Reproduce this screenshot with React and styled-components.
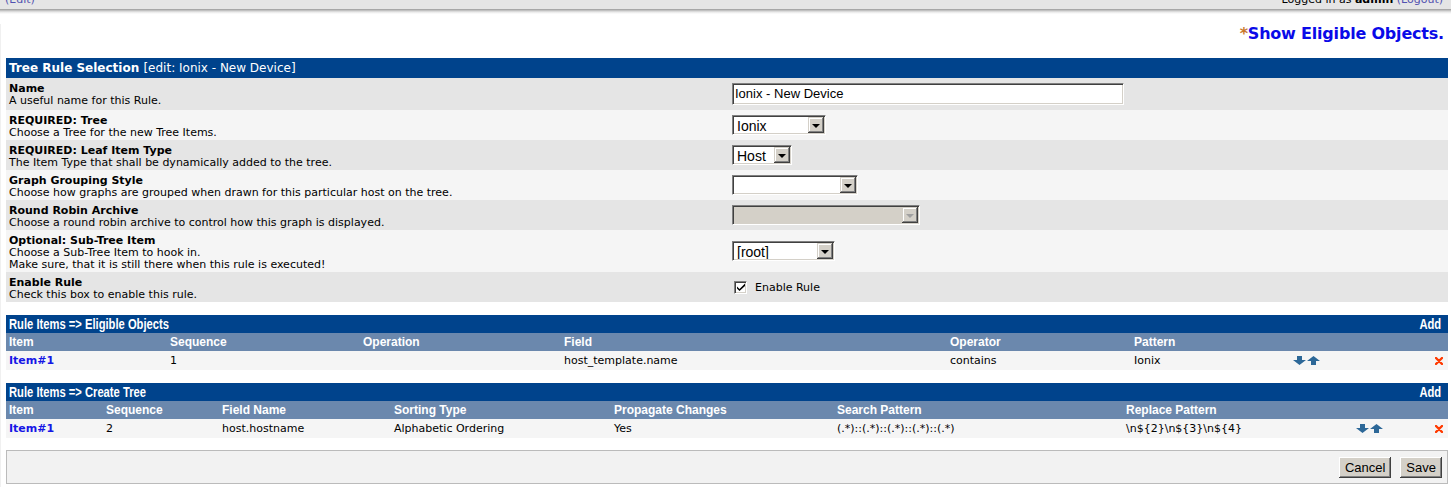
import React from "react"
import styled, { createGlobalStyle } from "styled-components"

const GlobalStyle = createGlobalStyle`
  html, body {
    margin: 0;
    padding: 0;
    background: #fff;
    font-family: "DejaVu Sans", Verdana, sans-serif;
    font-size: 11px;
    color: #000;
  }
`

const arial = `"Liberation Sans", Arial, sans-serif`

const TopBar = styled.div`
  height: 9px;
  overflow: hidden;
  background: #e5e5e5;
  display: flex;
  justify-content: space-between;
  padding: 0 8px 0 5px;
  font-size: 11px;
  line-height: 13px;
  > span {
    margin-top: -7px;
  }
  b {
    color: #000;
  }
  .link {
    color: #5151b0;
  }
`

const Shadow = styled.div`
  height: 5px;
  background: linear-gradient(#9a9a9a, #e8e8e8 60%, #fff);
`

const Page = styled.div`
  padding: 0 3px 20px 5px;
  border-left: 1px solid #f0f0f0;
`

const ShowLink = styled.div`
  margin: 10px 0 14px;
  padding-right: 4px;
  text-align: right;
  font-size: 16px;
  line-height: 20px;
  font-weight: bold;
  letter-spacing: -0.2px;
  color: #0a0ae8;
  .star {
    color: #c9782e;
  }
`

const TitleBar = styled.div`
  height: ${({ $narrow }) => ($narrow ? "18px" : "20px")};
  background: #00438c;
  color: #fff;
  display: flex;
  align-items: center;
  justify-content: space-between;
  padding: 0 7px 0 3px;
  font-family: ${({ $narrow }) => ($narrow ? arial : `"DejaVu Sans", sans-serif`)};
  font-size: ${({ $narrow }) => ($narrow ? "14px" : "12px")};
  font-weight: bold;
  .sub {
    font-weight: normal;
  }
`

const Condensed = styled.span`
  display: inline-block;
  white-space: nowrap;
  transform: scaleX(0.8);
  transform-origin: ${({ $end }) => ($end ? "right" : "left")} center;
`

const FormRow = styled.div`
  display: grid;
  grid-template-columns: 1fr 1fr;
  background: ${({ $alt }) => ($alt ? "#f5f5f5" : "#e5e5e5")};
`

const LabelCell = styled.div`
  padding: 5px 3px 1px;
  line-height: 12px;
  b {
    display: block;
  }
`

const ValueCell = styled.div`
  display: flex;
  align-items: center;
  padding-left: 5px;
`

const TextInput = styled.div`
  box-sizing: border-box;
  width: 392px;
  height: 22px;
  margin: 5px 0;
  background: #fff;
  border: 1px solid;
  border-color: #808080 #fff #fff #808080;
  box-shadow: inset 1px 1px #404040, inset -1px -1px #d4d0c8;
  font-family: ${arial};
  font-size: 13px;
  line-height: 20px;
  padding-left: 2px;
  color: #000;
`

const SelectBox = styled.div`
  box-sizing: border-box;
  width: ${({ $w }) => $w}px;
  height: 20px;
  display: flex;
  background: ${({ $disabled }) => ($disabled ? "#d4d0c8" : "#fff")};
  border: 1px solid;
  border-color: #808080 #fff #fff #808080;
  box-shadow: inset 1px 1px #404040, inset -1px -1px #d4d0c8;
  padding: 1px;
  font-family: ${arial};
  font-size: 14px;
  line-height: 18px;
`

const SelectText = styled.span`
  flex: 1;
  padding-left: 3px;
  white-space: nowrap;
  overflow: hidden;
`

const DropButton = styled.span`
  width: 16px;
  height: 100%;
  background: #d4d0c8;
  box-sizing: border-box;
  box-shadow: inset -1px -1px #404040, inset 1px 1px #d4d0c8,
    inset -2px -2px #808080, inset 2px 2px #fff;
  display: flex;
  align-items: center;
  justify-content: center;
  &::after {
    content: "";
    border-left: 4px solid transparent;
    border-right: 4px solid transparent;
    border-top: 4px solid ${({ $disabled }) => ($disabled ? "#a0a0a0" : "#000")};
    margin-top: 1px;
  }
`

const CheckLabel = styled.label`
  display: flex;
  align-items: center;
  gap: 8px;
  padding-left: 2px;
  font-size: 11px;
`

const CheckBox = styled.span`
  box-sizing: border-box;
  width: 13px;
  height: 13px;
  background: #fff;
  border: 1px solid;
  border-color: #808080 #fff #fff #808080;
  box-shadow: inset 1px 1px #404040, inset -1px -1px #d4d0c8;
  display: flex;
  align-items: center;
  justify-content: center;
`

const Section = styled.div`
  margin-top: 13px;
`

const GridRow = styled.div`
  display: grid;
  grid-template-columns: ${({ $cols }) => $cols};
  align-items: center;
  height: ${({ $h }) => $h}px;
  background: ${({ $head }) => ($head ? "#6b88ad" : "#f5f5f5")};
  color: ${({ $head }) => ($head ? "#fff" : "#000")};
  font-family: ${({ $head }) => ($head ? arial : `"DejaVu Sans", sans-serif`)};
  font-size: ${({ $head }) => ($head ? "12px" : "11px")};
  font-weight: ${({ $head }) => ($head ? "bold" : "normal")};
`

const Cell = styled.div`
  padding: 0 3px;
  white-space: nowrap;
  display: flex;
  align-items: center;
  justify-content: ${({ $spread }) => ($spread ? "space-between" : "flex-start")};
  padding-right: ${({ $spread }) => ($spread ? "5px" : "3px")};
`

const ItemLink = styled.span`
  color: #1616e6;
  font-weight: bold;
`

const Footer = styled.div`
  margin-top: 12px;
  height: 34px;
  box-sizing: border-box;
  border: 1px solid #bbb;
  background: #f2f2f2;
  display: flex;
  align-items: center;
  justify-content: flex-end;
  gap: 9px;
  padding-right: 5px;
`

const Button = styled.span`
  box-sizing: border-box;
  height: 21px;
  padding: 0 6px;
  background: #d4d0c8;
  box-shadow: inset -1px -1px #404040, inset 1px 1px #fff,
    inset -2px -2px #808080;
  font-family: ${arial};
  font-size: 13px;
  line-height: 21px;
  color: #000;
`

function Select({ w, value, disabled }) {
  return (
    <SelectBox $w={w} $disabled={disabled}>
      <SelectText>{value}</SelectText>
      <DropButton $disabled={disabled} />
    </SelectBox>
  )
}

function Arrows() {
  return (
    <svg width="27" height="9" viewBox="0 0 27 9">
      <path d="M4 0h5v4h4L6.5 9 0 4h4z" fill="#2d6898" />
      <path d="M20.5 0 27 5h-4v4h-5V5h-4z" fill="#2d6898" />
    </svg>
  )
}

function DeleteIcon() {
  return (
    <svg width="8" height="8" viewBox="0 0 8 8">
      <path d="M1 1l6 6M7 1L1 7" stroke="#ff3a00" strokeWidth="2.4" strokeLinecap="round" />
    </svg>
  )
}

const formRows = [
  { label: "Name", desc: ["A useful name for this Rule."], input: "Ionix - New Device" },
  { label: "REQUIRED: Tree", desc: ["Choose a Tree for the new Tree Items."], select: { w: 94, value: "Ionix" } },
  { label: "REQUIRED: Leaf Item Type", desc: ["The Item Type that shall be dynamically added to the tree."], select: { w: 60, value: "Host" } },
  { label: "Graph Grouping Style", desc: ["Choose how graphs are grouped when drawn for this particular host on the tree."], select: { w: 126, value: "" } },
  { label: "Round Robin Archive", desc: ["Choose a round robin archive to control how this graph is displayed."], select: { w: 188, value: "", disabled: true } },
  { label: "Optional: Sub-Tree Item", desc: ["Choose a Sub-Tree Item to hook in.", "Make sure, that it is still there when this rule is executed!"], select: { w: 103, value: "[root]" } },
  { label: "Enable Rule", desc: ["Check this box to enable this rule."], check: "Enable Rule" },
]

const eligibleCols = "161px 193px 201px 386px 184px 159px 1fr"
const treeCols = "97px 116px 172px 220px 223px 289px 230px 1fr"

function RuleTable({ title, cols, headers, cells }) {
  return (
    <Section>
      <TitleBar $narrow>
        <Condensed>{title}</Condensed>
        <Condensed $end>Add</Condensed>
      </TitleBar>
      <GridRow $head $cols={cols} $h={18}>
        {headers.map((h, i) => (
          <Cell key={i}>{h}</Cell>
        ))}
      </GridRow>
      <GridRow $cols={cols} $h={19}>
        <Cell><ItemLink>Item#1</ItemLink></Cell>
        {cells.map((c, i) => (
          <Cell key={i}>{c}</Cell>
        ))}
        <Cell $spread>
          <Arrows />
          <DeleteIcon />
        </Cell>
      </GridRow>
    </Section>
  )
}

export default function App() {
  return (
    <>
      <GlobalStyle />
      <TopBar>
        <span className="link">(Edit)</span>
        <span>
          Logged in as <b>admin</b> <span className="link">(Logout)</span>
        </span>
      </TopBar>
      <Shadow />
      <Page>
        <ShowLink>
          <span className="star">*</span>Show Eligible Objects.
        </ShowLink>

        <TitleBar>
          <span>
            Tree Rule Selection <span className="sub">[edit: Ionix - New Device]</span>
          </span>
        </TitleBar>
        {formRows.map((row, i) => (
          <FormRow key={row.label} $alt={i % 2 === 1}>
            <LabelCell>
              <b>{row.label}</b>
              {row.desc.map((d) => (
                <div key={d}>{d}</div>
              ))}
            </LabelCell>
            <ValueCell>
              {row.input && <TextInput>{row.input}</TextInput>}
              {row.select && <Select {...row.select} />}
              {row.check && (
                <CheckLabel>
                  <CheckBox>
                    <svg width="8" height="8" viewBox="0 0 8 8">
                      <path d="M0 3.5l2.5 2.5L8 0.5v2.5L2.5 8 0 5.5z" fill="#000" />
                    </svg>
                  </CheckBox>
                  {row.check}
                </CheckLabel>
              )}
            </ValueCell>
          </FormRow>
        ))}

        <RuleTable
          title="Rule Items => Eligible Objects"
          cols={eligibleCols}
          headers={["Item", "Sequence", "Operation", "Field", "Operator", "Pattern", ""]}
          cells={["1", "", "host_template.name", "contains", "Ionix"]}
        />

        <RuleTable
          title="Rule Items => Create Tree"
          cols={treeCols}
          headers={["Item", "Sequence", "Field Name", "Sorting Type", "Propagate Changes", "Search Pattern", "Replace Pattern", ""]}
          cells={[
            "2",
            "host.hostname",
            "Alphabetic Ordering",
            "Yes",
            "(.*)::(.*)::(.*)::(.*)::(.*)",
            "\\n${2}\\n${3}\\n${4}",
          ]}
        />

        <Footer>
          <Button>Cancel</Button>
          <Button>Save</Button>
        </Footer>
      </Page>
    </>
  )
}
